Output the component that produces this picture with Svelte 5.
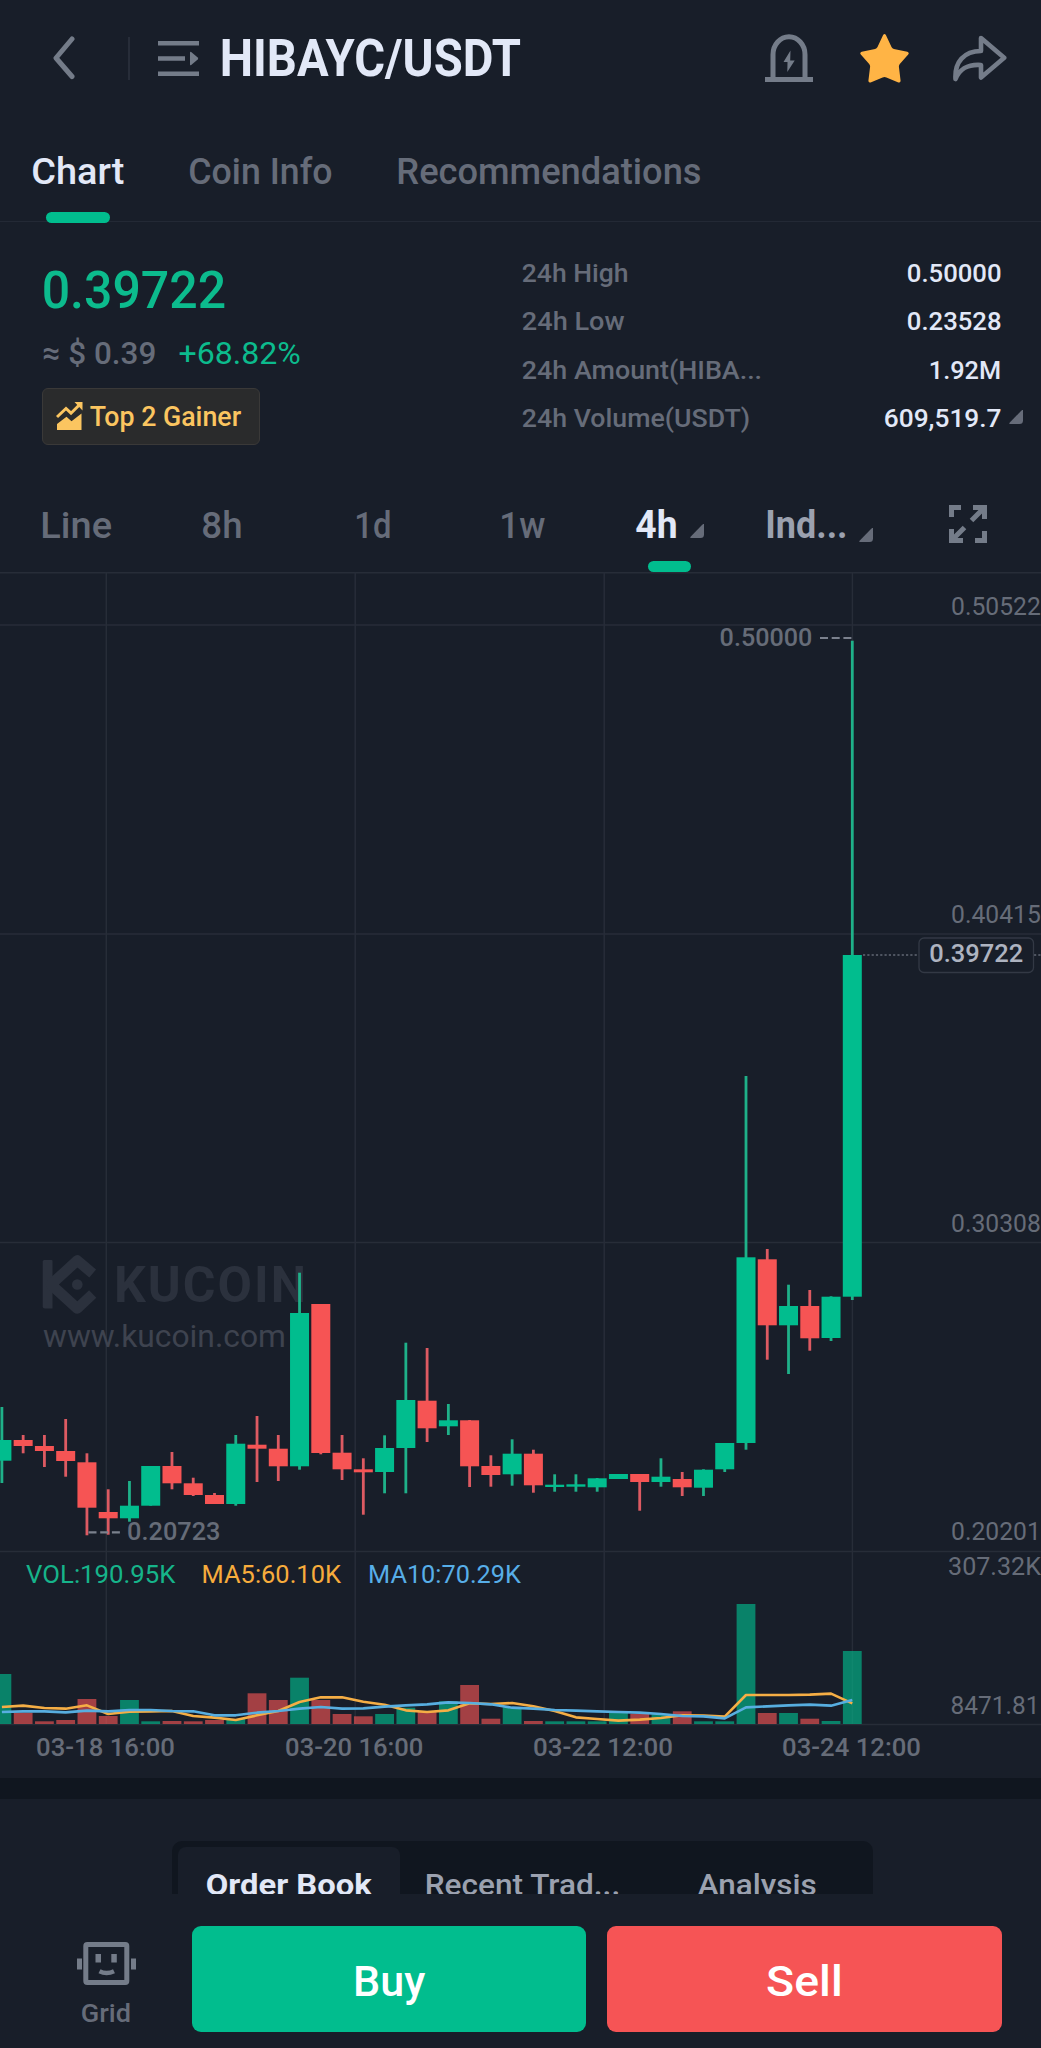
<script lang="ts">
  // Roboto cap height as a share of the font size
  const CAP = 0.711;

  type Candle = [up: number, high: number, top: number, bottom: number, low: number, volumeTop: number];

  // Four-hour candles, oldest first, in chart pixels
  const candles: Candle[] = [
    [1, 1407, 1440, 1460.7, 1483, 1674],
    [0, 1435, 1440, 1446, 1453.3, 1712.7],
    [0, 1435, 1446, 1451, 1467, 1721.3],
    [0, 1419, 1451, 1461, 1476.7, 1720],
    [0, 1453.3, 1462.3, 1507.7, 1535.3, 1699],
    [0, 1489.3, 1512, 1518.3, 1534.7, 1716],
    [1, 1481, 1505.7, 1518.3, 1521.7, 1700],
    [1, 1466, 1466, 1505.7, 1505.7, 1721.3],
    [0, 1452, 1466, 1483.3, 1489.3, 1721],
    [0, 1477.7, 1483.3, 1495, 1496, 1721.3],
    [0, 1493, 1495, 1504, 1504, 1720],
    [1, 1435, 1443.7, 1504, 1505.7, 1719],
    [0, 1416, 1444.7, 1448.7, 1482, 1693.3],
    [0, 1435, 1448.7, 1466.3, 1481, 1700],
    [1, 1272.7, 1313, 1466.3, 1469.7, 1677.7],
    [0, 1304, 1304, 1453, 1454.3, 1700],
    [0, 1435, 1452.7, 1469.3, 1480, 1714],
    [0, 1458.3, 1469.3, 1472.3, 1514.7, 1716.3],
    [1, 1435.3, 1448, 1472, 1493.3, 1714],
    [1, 1342.7, 1400, 1448, 1493.3, 1707.7],
    [0, 1348, 1400.7, 1428.3, 1442, 1711],
    [1, 1404, 1420.3, 1426.3, 1435, 1701.3],
    [0, 1420, 1420.3, 1466.3, 1487, 1685],
    [0, 1455.3, 1466, 1475, 1486.7, 1718.7],
    [1, 1439.3, 1453.7, 1474.3, 1485.7, 1707.3],
    [0, 1449.7, 1453.7, 1485.3, 1492.7, 1721],
    [1, 1474.3, 1484.7, 1487, 1491.7, 1721.3],
    [1, 1474.3, 1484.3, 1486.7, 1491.7, 1721.3],
    [1, 1478, 1478.3, 1487.3, 1491.7, 1721.3],
    [1, 1474, 1474, 1479, 1479, 1713],
    [0, 1474, 1474, 1482, 1510.7, 1713.7],
    [1, 1458.3, 1476.7, 1482, 1486.7, 1714.3],
    [0, 1472, 1479, 1487.3, 1496, 1711.3],
    [1, 1469.3, 1469.7, 1487.7, 1496, 1721.3],
    [1, 1443, 1443, 1469.3, 1472, 1721.3],
    [1, 1076, 1257.3, 1443, 1449.7, 1604],
    [0, 1249, 1259.3, 1325.3, 1359.7, 1713],
    [1, 1284.7, 1306, 1325.3, 1374, 1713],
    [0, 1290, 1306, 1338.3, 1350.7, 1718.7],
    [1, 1296.3, 1296.7, 1338, 1341, 1721],
    [1, 640.7, 955, 1296.7, 1300, 1651]
  ];

  const cx = (i: number) => 1.9 + i * 21.26;

  const ma5 = [531, 527, 534, 536, 526, 552, 545, 544, 543, 558, 563, 570, 556, 543, 516, 502, 502, 515, 524, 541, 546, 541, 520, 522, 519, 529, 543, 562, 567, 572, 569, 564, 556, 557, 560, 495, 495, 495, 494, 491, 520];
  const ma10 = [546, 544, 544, 547, 542, 544, 540, 540, 543, 544, 556, 556, 548, 543, 536, 531, 536, 535, 530, 526, 523, 517, 519, 523, 533, 536, 540, 542, 544, 546, 548, 552, 558, 559, 565, 532, 529, 526, 524, 527, 510];
  const line = (values: number[]) => values.map((v, i) => `${cx(i)},${1530 + v / 3}`).join(' ');

  // text, x, baseline, width, class
  const chartLabels: [string, number, number, number, string][] = [
    ['0.50522', 952.5, 614.5, 87, 'axis'],
    ['0.40415', 952.5, 923.2, 87, 'axis'],
    ['0.30308', 952.5, 1232, 87, 'axis'],
    ['0.20201', 952.5, 1540.3, 87, 'axis'],
    ['307.32K', 949.5, 1575, 90, 'axis'],
    ['8471.81', 952, 1713.6, 86, 'axis'],
    ['0.50000', 721, 645.6, 90, 'axis mid'],
    ['0.20723', 128.5, 1539.6, 90.5, 'axis mid'],
    ['VOL:190.95K', 27.5, 1583, 146.5, 'vol'],
    ['MA5:60.10K', 203, 1583, 136.5, 'ma5'],
    ['MA10:70.29K', 369.5, 1583, 150, 'ma10'],
    ['03-18 16:00', 37.5, 1756, 136, 'axis mid'],
    ['03-20 16:00', 286.5, 1756, 135.5, 'axis mid'],
    ['03-22 12:00', 534.5, 1756, 137, 'axis mid'],
    ['03-24 12:00', 783.5, 1756, 136, 'axis mid']
  ];

  const stats: [string, number, string, number][] = [
    ['24h High', 104.5, '0.50000', 92.5],
    ['24h Low', 100.5, '0.23528', 92.5],
    ['24h Amount(HIBA...', 238, '1.92M', 70],
    ['24h Volume(USDT)', 226, '609,519.7', 115.5]
  ];
</script>

{#snippet label(text: string, w: number, size: number, cls: string)}
  <svg class="label {cls}" width={w} height={size * CAP}>
    <text x={-size * 0.045} y={size * CAP} font-size={size} textLength={w + size * 0.085} lengthAdjust="spacingAndGlyphs">{text}</text>
  </svg>
{/snippet}

{#snippet corner()}
  <svg class="corner" width="14" height="14" viewBox="0 0 14 14"><path d="M14 0v10.500a3.500 3.500 0 0 1-3.500 3.500H1.500Q-.5 14 .8 12.500L12 1Q14-1 14 0z" /></svg>
{/snippet}

<div class="screen">
  <header>
    <svg class="back" width="22" height="44" viewBox="0 0 22 44"><path d="M19 3 3 22l16 18.500" /></svg>
    <i class="rule"></i>
    <svg class="menu" width="41" height="36" viewBox="0 0 41 36">
      <path d="M0 1h41v4.500H0zM0 16.300h27v4.500H0zM0 31.500h41V36H0z" />
      <path d="M32 12.500v12q0 1.200 1.200.5l6.500-5.500q1-1 0-2l-6.500-5.500q-1.200-.7-1.200.5z" />
    </svg>
    {@render label('HIBAYC/USDT', 297, 51, 'bright bold')}
    <div class="actions">
      <svg class="alarm" width="48" height="48" viewBox="0 0 48 48">
        <path class="stroke" d="M8 44V20.500a15.800 17.500 0 0 1 32 0V44" />
        <path d="M0 43h48v5H0zM25.500 16.500 18.500 28h4L22.300 38 29.700 26.500h-4.500z" />
      </svg>
      <svg class="star" width="49" height="49" viewBox="0 0 49 49">
        <path d="M23 1.200q1.500-2.200 3 0L31.500 13q.8 1.500 2.400 2l13.400 2.800q2.400.9.900 2.700l-8.400 9.500q-1 1.200-.9 2.800l1.700 14q-.1 2.300-2.200 1.600l-12-5q-1.900-.8-3.800 0l-12 5q-2.100.7-2.200-1.600l1.700-14q.1-1.600-.9-2.800L.8 20.500q-1.500-1.800.9-2.700L15.100 15q1.600-.5 2.400-2z" />
      </svg>
      <svg width="54" height="47" viewBox="0 0 54 47">
        <path class="stroke thin" d="M28 3 51.200 22.800 28 42.500V30C14 29 7 34 2.500 44 1.500 27 11 16 28 16z" />
      </svg>
    </div>
  </header>

  <nav class="tabs">
    <div class="tab active">{@render label('Chart', 90, 37.5, 'bright medium')}</div>
    <div class="tab">{@render label('Coin Info', 141, 37.5, 'grey medium')}</div>
    <div class="tab">{@render label('Recommendations', 302, 37.5, 'grey medium')}</div>
  </nav>

  <section class="summary">
    <div class="quote">
      {@render label('0.39722', 180, 52.5, 'green medium')}
      <div class="fiat">
        {@render label('≈ $ 0.39', 111, 32, 'grey medium')}
        {@render label('+68.82%', 119.5, 32, 'green')}
      </div>
      <div class="badge">
        <svg width="27" height="28" viewBox="0 0 27 28">
          <path class="zig" d="M1 15 10 6.500l5 4.700 8-8" />
          <path d="M18.500 0H26.500v8.500zM1 22 10.500 14.800l5 4.500L25.500 11.500V28H1z" />
        </svg>
        {@render label('Top 2 Gainer', 149, 27, 'gold medium')}
      </div>
    </div>
    <div class="stats">
      {#each stats as [name, nameWidth, value, valueWidth]}
        <div class="stat">
          {@render label(name, nameWidth, 26.5, 'grey medium')}
          {@render label(value, valueWidth, 26.5, 'bright medium')}
        </div>
      {/each}
      <div class="more">{@render corner()}</div>
    </div>
  </section>

  <nav class="intervals">
    {@render label('Line', 68.500, 37.5, 'grey medium')}
    {@render label('8h', 38, 37.5, 'grey medium')}
    {@render label('1d', 34, 37.5, 'grey medium')}
    {@render label('1w', 43, 37.5, 'grey medium')}
    <div class="pick current">
      {@render label('4h', 39, 38, 'bright bold')}
      {@render corner()}
    </div>
    <div class="pick indicators">
      {@render label('Ind...', 79, 38, 'soft bold')}
      {@render corner()}
    </div>
    <svg class="expand" width="38" height="38" viewBox="0 0 38 38">
      <path d="M2.500 12V2.500H12M24 2.500h11.500V14M35.500 26v9.500H26M14 35.500H2.500V24M34 4 22.500 15.500M4 34 15.500 22.500" />
    </svg>
  </nav>

  <svg class="chart" width="1041" height="1206" viewBox="0 572 1041 1206">
    <g class="grid">
      <path d="M0 572.750H1041M0 625H1041M0 934H1041M0 1242.500H1041M0 1551.500H1041M0 1724.500H1041" />
      <path d="M106.300 572V1724M355.200 572V1724M604.200 572V1724M852.400 572V1724" />
    </g>

    <g class="mark">
      <path class="stem" d="M44 1260h7.500q1 0 1 1v47.500H45q-2.300 0-2.300-2V1261z" />
      <path class="ring" d="M92.700 1273.500 77.300 1260.500 51 1284.500l26.300 24 15.400-14.500" />
      <circle cx="77.300" cy="1284.500" r="5.300" />
      <text class="brand" x="114" y="1302.300" textLength="192">KUCOIN</text>
      <text class="site" x="43" y="1347" textLength="243" lengthAdjust="spacingAndGlyphs">www.kucoin.com</text>
    </g>

    {#each candles as [up, high, top, bottom, low, volumeTop], i}
      <g class={up ? 'up' : 'down'}>
        <rect class="wick" x={cx(i) - 1.4} y={high} width="2.8" height={low - high} />
        <rect x={cx(i) - 9.5} y={top} width="19" height={bottom - top} />
        <rect class="volume" x={cx(i) - 9.4} y={volumeTop} width="18.800" height={1724 - volumeTop} />
      </g>
    {/each}

    <polyline class="average five" points={line(ma5)} />
    <polyline class="average ten" points={line(ma10)} />

    <path class="dash" d="M820 638h32M88.500 1532.300h31.500" />
    <path class="dots" d="M863 955h56M1034 955h7" />
    <rect class="tag" x="919" y="938" width="114.500" height="34.500" rx="5" />
    <text class="last" x="929.200" y="961.700" textLength="94" lengthAdjust="spacingAndGlyphs">0.39722</text>

    {#each chartLabels as [text, x, y, w, cls]}
      <text class={cls} x={x - 1.4} {y} textLength={w + 2.8} lengthAdjust="spacingAndGlyphs">{text}</text>
    {/each}
  </svg>

  <div class="band"></div>

  <section class="book">
    <div class="segments">
      <div class="segment on">{@render label('Order Book', 163.5, 29.5, 'bright bold')}</div>
      <div class="segment">{@render label('Recent Trad...', 193, 29.5, 'soft medium')}</div>
      <div class="segment">{@render label('Analysis', 116.5, 29.5, 'soft medium')}</div>
    </div>
  </section>

  <footer>
    <div class="bot">
      <svg width="59" height="43" viewBox="0 0 59 43">
        <rect class="head" x="8.800" y="2.500" width="41" height="38" rx="1.500" />
        <path d="M0 16.400h5v11H0zM54 16.400h5v11h-5zM18.500 12h5.500v8.500h-5.500zM34.300 12h5.500v8.500h-5.500z" />
        <path class="smile" d="M22.500 29.300q7 3.500 14.500 0" />
      </svg>
      {@render label('Grid', 48, 26.5, 'grey medium')}
    </div>
    <div class="button buy">{@render label('Buy', 68.5, 43, 'white medium')}</div>
    <div class="button sell">{@render label('Sell', 73, 43, 'white medium')}</div>
  </footer>
</div>

<style>
  :global(body) {
    margin: 0;
    background: #181e29;
  }
  .screen {
    width: 1041px;
    height: 2048px;
    overflow: hidden;
    background: #181e29;
    font-family: Roboto, 'Liberation Sans', sans-serif;
    display: flex;
    flex-direction: column;
  }
  svg { display: block; flex: none; }
  .label { overflow: visible; }
  .medium { font-weight: 500; }
  .bold { font-weight: 700; }
  .bright { fill: #e2e8f7; }
  .grey { fill: #666c79; }
  .soft { fill: #9ba1af; }
  .green { fill: #0cbb8d; }
  .gold { fill: #fbc560; }
  .white { fill: #fff; }
  .corner { fill: #666c79; }

  header {
    height: 116px;
    box-sizing: border-box;
    padding: 0 34px 0 53px;
    display: flex;
    align-items: center;
    flex: none;
    fill: #747c89;
  }
  .back {
    fill: none;
    stroke: #747c89;
    stroke-width: 5;
    stroke-linecap: round;
    stroke-linejoin: round;
  }
  .rule { width: 2px; height: 43px; margin: 0 28px 0 53px; background: #272d39; }
  .menu { margin-right: 23px; }
  .actions { display: flex; align-items: center; gap: 44px; margin-left: auto; }
  .alarm { margin-right: 3px; }
  .stroke { fill: none; stroke: #747c89; stroke-width: 5; stroke-linejoin: round; }
  .thin { stroke-width: 4.6; }
  .star { fill: #ffb445; }

  .tabs {
    height: 106px;
    box-sizing: border-box;
    padding: 40.500px 0 0 33px;
    display: flex;
    gap: 67px;
    border-bottom: 1.5px solid #232935;
    flex: none;
  }
  .tab { height: 65px; display: flex; flex-direction: column; justify-content: space-between; }
  .active::after {
    content: '';
    width: 64px;
    height: 11px;
    margin: 0 0 -1px 13px;
    border-radius: 6px;
    background: #01bd8e;
  }

  .summary { height: 251px; display: flex; flex: none; }
  .quote { width: 479px; padding: 49px 0 0 44px; display: flex; flex-direction: column; }
  .fiat { display: flex; gap: 24.500px; margin: 32.500px 0 24px 0; }
  .badge {
    width: 218px;
    height: 57px;
    margin-left: -2px;
    box-sizing: border-box;
    border: 1px solid #3a3938;
    border-radius: 6px;
    background: #2a2b2c;
    display: flex;
    align-items: center;
    gap: 8px;
    padding-left: 13px;
    fill: #fbc560;
  }
  .badge .gold { margin-top: 2px; }
  .zig { fill: none; stroke: #fbc560; stroke-width: 3; }
  .stats { flex: 1; padding: 41px 18px 0 0; position: relative; }
  .stat { width: 477px; height: 48.300px; display: flex; justify-content: space-between; }
  .more { position: absolute; right: 18px; top: 188px; }

  .intervals {
    height: 99px;
    box-sizing: border-box;
    padding: 38px 53px 0 41.500px;
    display: flex;
    flex: none;
    align-items: flex-start;
    gap: 93px;
  }
  .intervals > :nth-child(3) { margin-left: 21.500px; }
  .intervals > :nth-child(4) { margin-left: 18px; }
  .pick { display: flex; align-items: flex-end; gap: 14px; position: relative; height: 27px; }
  .indicators { margin-left: -29.500px; }
  .indicators .corner { margin: 0 0 -4px -1px; }
  .current::after {
    content: '';
    position: absolute;
    left: 11px;
    top: 50px;
    width: 43px;
    height: 11px;
    border-radius: 6px;
    background: #01bd8e;
  }
  .expand {
    margin: -6px 0 0 -17px;
    fill: none;
    stroke: #747c89;
    stroke-width: 5;
  }

  .chart { font-size: 26.5px; }
  .grid { fill: none; stroke: #272d38; stroke-width: 1.5; }
  .mark { fill: #2b313d; }
  .ring { fill: none; stroke: #2b313d; stroke-width: 10.5; stroke-linejoin: round; }
  .brand { font-size: 50px; font-weight: 700; }
  .site { font-size: 32px; fill: #3e434f; }
  .up { fill: #01bd8e; }
  .down { fill: #f65454; }
  .up .wick { fill: #1fb189; }
  .down .wick { fill: #dd5a62; }
  .volume { opacity: 0.63; }
  .average { fill: none; stroke-width: 2.600; stroke-linejoin: round; }
  .five { stroke: #f5ae45; }
  .ten { stroke: #57aee0; }
  .axis { fill: #666c78; }
  .mid { font-weight: 500; }
  .vol { fill: #16b48a; }
  .ma5 { fill: #f7ac3c; }
  .ma10 { fill: #57aee8; }
  .dash { stroke: #7b818d; stroke-width: 2.2; stroke-dasharray: 8 3.7; }
  .dots { stroke: #4f5561; stroke-width: 2; stroke-dasharray: 2.2 2.100; }
  .tag { fill: #181e29; stroke: #333945; stroke-width: 1.3; }
  .last { fill: #adb3c0; font-weight: 500; }

  .band { height: 21px; background: #10161f; flex: none; }

  .book { height: 95px; padding-top: 42px; box-sizing: border-box; overflow: hidden; flex: none; }
  .segments {
    width: 701px;
    height: 82px;
    box-sizing: border-box;
    margin-left: 171.500px;
    padding: 6px;
    border-radius: 10px;
    background: #10161f;
    display: flex;
  }
  .segment { flex: 1; display: flex; justify-content: center; padding-top: 27px; }
  .segment.on { flex: 0 0 222px; background: #181e29; border-radius: 8px; }
  .segment:nth-child(2) { flex: 0 0 246px; }
  .segment:nth-child(3) { padding-left: 2px; }

  footer {
    flex: 1;
    display: flex;
    align-items: flex-start;
    gap: 21px;
    padding: 32px 39px 0 77px;
  }
  .bot {
    width: 93.500px;
    padding-top: 15.500px;
    display: flex;
    flex-direction: column;
    gap: 18.500px;
    fill: #747c89;
  }
  .bot > :global(.label) { margin-left: 5px; }
  .head { fill: none; stroke: #747c89; stroke-width: 5; }
  .smile { fill: none; stroke: #747c89; stroke-width: 4.500; }
  .button {
    flex: 1;
    height: 106px;
    box-sizing: border-box;
    padding-top: 3px;
    border-radius: 9px;
    display: flex;
    align-items: center;
    justify-content: center;
  }
  .buy { background: #01bd8e; }
  .sell { background: #f65455; }
</style>
